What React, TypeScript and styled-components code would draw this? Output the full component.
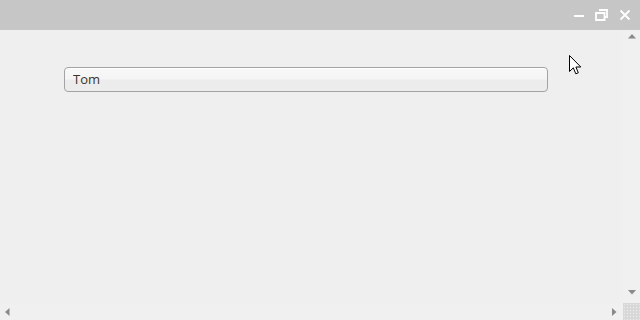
import React from 'react';
import styled, {createGlobalStyle} from 'styled-components';

const GlobalStyle = createGlobalStyle`
    html, body {
        margin: 0;
        padding: 0;
        background: #efefef;
    }
    body {
        font-family: "Segoe UI", "Open Sans", "Noto Sans", "DejaVu Sans", sans-serif;
    }
`;

const dots = `radial-gradient(rgba(255,255,255,0.55) 0.6px, transparent 0.9px) 0 0 / 4px 4px`;

const Frame = styled.div`
    width: 640px;
    height: 320px;
    display: flex;
    flex-direction: column;
    position: relative;
    overflow: hidden;
    background: #efefef;
`;

const TitleBar = styled.div`
    height: 30px;
    flex: none;
    background: #c6c6c6;
    display: flex;
    justify-content: flex-end;
    align-items: center;
    gap: 8px;
    padding-right: 8px;
`;

const WinButton = styled.button`
    width: 15px;
    height: 15px;
    padding: 0;
    border: none;
    background: none;
    display: flex;
    align-items: center;
    justify-content: center;
`;

const Middle = styled.div`
    flex: 1;
    display: flex;
    min-height: 0;
`;

const Content = styled.main`
    flex: 1;
    padding: 37px 0 0 64px;
`;

const Field = styled.input`
    display: block;
    box-sizing: border-box;
    width: 484px;
    height: 25px;
    padding: 0 8px 1px;
    border: 1px solid #a3a3a3;
    border-radius: 4px;
    background: linear-gradient(#f8f8f8 0%, #f5f5f5 48%, #ececec 52%, #ececec 100%);
    box-shadow: inset 0 1px 0 #ffffff;
    font-family: "Segoe UI", "Open Sans", "Noto Sans", sans-serif;
    font-size: 13px;
    color: #3d3328;
    outline: none;
`;

const VScroll = styled.div`
    width: 17px;
    flex: none;
    background: #f0f0f0;
    background-image: ${dots};
    display: flex;
    flex-direction: column;
    justify-content: space-between;
    align-items: center;
    padding: 4px 0 8px;
    box-sizing: border-box;
`;

const BottomRow = styled.div`
    height: 17px;
    flex: none;
    display: flex;
`;

const HScroll = styled.div`
    flex: 1;
    background: #f0f0f0;
    background-image: ${dots};
    display: flex;
    justify-content: space-between;
    align-items: center;
    padding: 0 6px 0 5px;
`;

const Corner = styled.div`
    width: 17px;
    height: 17px;
    background: #d8d8d8;
    background-image: radial-gradient(rgba(255,255,255,0.5) 0.6px, transparent 0.9px);
    background-size: 3px 3px;
`;

const Arrow = styled.svg`
    display: block;
    fill: #8a8a8a;
`;

const Pointer = styled.svg`
    position: absolute;
    left: 569px;
    top: 55px;
`;

export default function App() {
    return (
        <>
            <GlobalStyle/>
            <Frame>
                <TitleBar>
                    <WinButton aria-label="Minimize">
                        <svg width="11" height="11" viewBox="0 0 11 11">
                            <rect x="1" y="5" width="10" height="2" fill="#fff"/>
                        </svg>
                    </WinButton>
                    <WinButton aria-label="Restore">
                        <svg width="13" height="12" viewBox="0 0 13 12">
                            <path d="M4 1h8v7h-2.5M1 4h8.5v7H1z" stroke="#fff" strokeWidth="1.8" fill="none"/>
                        </svg>
                    </WinButton>
                    <WinButton aria-label="Close">
                        <svg width="12" height="12" viewBox="0 0 12 12">
                            <path d="M1.5 1.5l9 9M10.5 1.5l-9 9" stroke="#fff" strokeWidth="1.8"/>
                        </svg>
                    </WinButton>
                </TitleBar>
                <Middle>
                    <Content>
                        <Field defaultValue="Tom"/>
                    </Content>
                    <VScroll>
                        <Arrow width="8" height="5" viewBox="0 0 8 5">
                            <path d="M4 0L8 4.5H0z"/>
                        </Arrow>
                        <Arrow width="8" height="5" viewBox="0 0 8 5">
                            <path d="M0 0H8L4 4.5z"/>
                        </Arrow>
                    </VScroll>
                </Middle>
                <BottomRow>
                    <HScroll>
                        <Arrow width="5" height="8" viewBox="0 0 5 8">
                            <path d="M0 4L4.5 0V8z"/>
                        </Arrow>
                        <Arrow width="5" height="8" viewBox="0 0 5 8">
                            <path d="M0 0L4.5 4L0 8z"/>
                        </Arrow>
                    </HScroll>
                    <Corner/>
                </BottomRow>
                <Pointer width="13" height="20" viewBox="0 0 13 20">
                    <path d="M0.5 0.5V16.5L4.3 12.8L6.8 18.8L9.3 17.8L6.9 12H11.8Z" fill="#fff" stroke="#000" strokeWidth="1" strokeLinejoin="miter"/>
                </Pointer>
            </Frame>
        </>
    );
}
